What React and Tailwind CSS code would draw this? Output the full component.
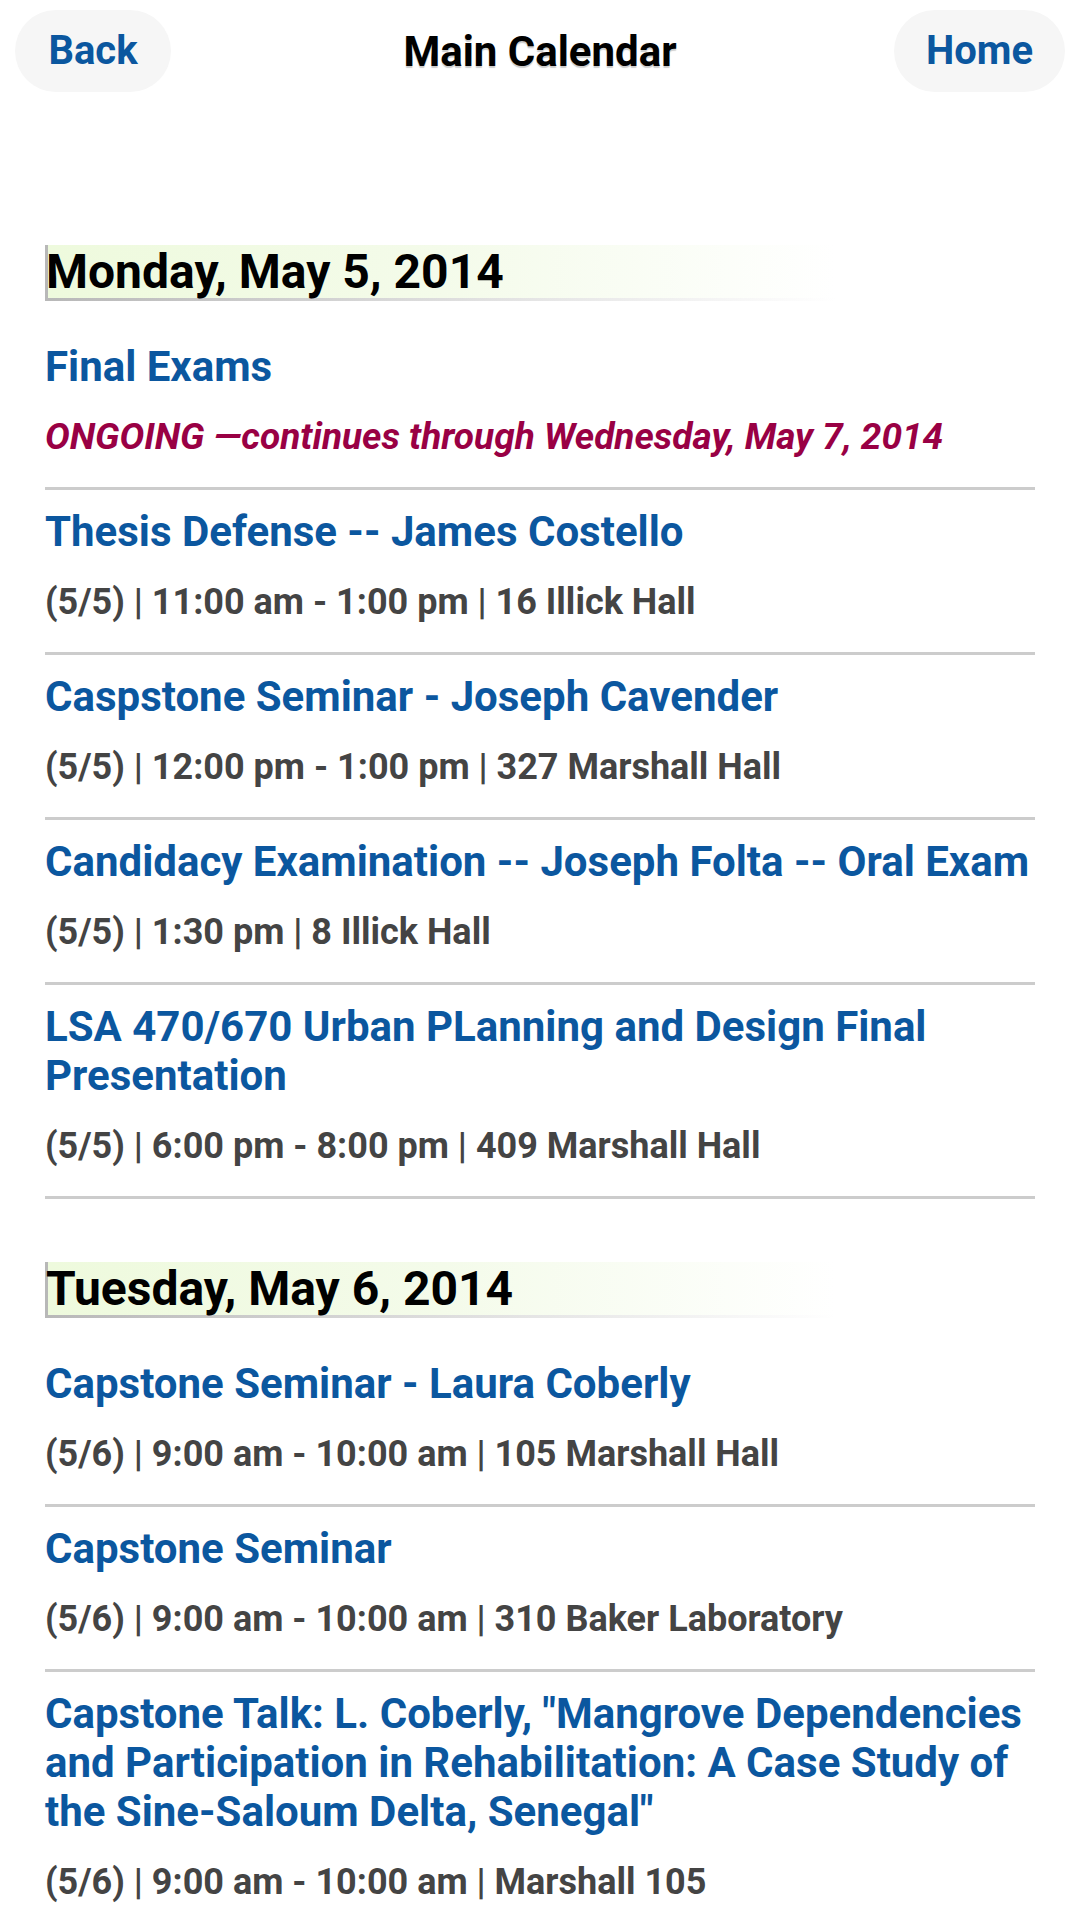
import React from 'react';

const days = [
  {
    label: 'Monday, May 5, 2014',
    events: [
      { title: 'Final Exams', ongoing: 'ONGOING —continues through Wednesday, May 7, 2014' },
      { title: 'Thesis Defense -- James Costello', info: '(5/5) | 11:00 am - 1:00 pm | 16 Illick Hall' },
      { title: 'Caspstone Seminar - Joseph Cavender', info: '(5/5) | 12:00 pm - 1:00 pm | 327 Marshall Hall' },
      { title: 'Candidacy Examination -- Joseph Folta -- Oral Exam', info: '(5/5) | 1:30 pm | 8 Illick Hall' },
      { title: 'LSA 470/670 Urban PLanning and Design Final Presentation', info: '(5/5) | 6:00 pm - 8:00 pm | 409 Marshall Hall' },
    ],
  },
  {
    label: 'Tuesday, May 6, 2014',
    events: [
      { title: 'Capstone Seminar - Laura Coberly', info: '(5/6) | 9:00 am - 10:00 am | 105 Marshall Hall' },
      { title: 'Capstone Seminar', info: '(5/6) | 9:00 am - 10:00 am | 310 Baker Laboratory' },
      {
        title: 'Capstone Talk: L. Coberly, "Mangrove Dependencies and Participation in Rehabilitation: A Case Study of the Sine-Saloum Delta, Senegal"',
        info: '(5/6) | 9:00 am - 10:00 am | Marshall 105',
        last: true,
      },
    ],
  },
];

function EventRow({ ev }) {
  return (
    <div className={ev.last ? 'pt-[17px]' : 'pt-[17px] pb-[29px] border-b-[3px] border-[#cccccc]'}>
      <a href="#" className="block text-[42px] leading-[49px] font-bold text-[#0b579f]">
        {ev.title}
      </a>
      {ev.ongoing ? (
        <p className="mt-[25px] text-[37px] leading-[42px] font-bold italic text-[#990044]">{ev.ongoing}</p>
      ) : (
        <p className="mt-[25px] text-[36px] leading-[42px] font-bold text-[#444444]">{ev.info}</p>
      )}
    </div>
  );
}

export default function App() {
  return (
    <div className="w-[1080px] min-h-[1920px] bg-white font-['Roboto','Liberation_Sans',sans-serif]">
      <header className="grid grid-cols-[1fr_auto_1fr] items-center px-[15px] pt-[10px]">
        <div>
          <button className="h-[82px] w-[156px] rounded-full bg-[#f6f6f6] text-[40px] font-bold text-[#0b579f]">Back</button>
        </div>
        <h1 className="text-[42px] font-bold text-black [text-shadow:0_2px_1px_rgba(0,0,0,0.2)]">Main Calendar</h1>
        <div className="flex justify-end">
          <button className="h-[82px] w-[171px] rounded-full bg-[#f6f6f6] text-[40px] font-bold text-[#0b579f]">Home</button>
        </div>
      </header>

      <main className="px-[45px] pt-[153px]">
        {days.map((day, i) => (
          <section key={day.label} className={i > 0 ? 'mt-[63px]' : ''}>
            <h2 className="w-[790px] h-[56px] border-l-[3px] border-b-[3px] bg-gradient-to-r from-[#eefadd] via-[#f4fbea] to-white text-[48px] leading-[53px] font-bold text-black [border-image:linear-gradient(to_right,#b8b8b8,#dddddd_50%,#ffffff)_1]">
              <span className="-ml-[2px]">{day.label}</span>
            </h2>
            <div className="pt-[24px]">
              {day.events.map((ev) => (
                <EventRow key={ev.title} ev={ev} />
              ))}
            </div>
          </section>
        ))}
      </main>
    </div>
  );
}
